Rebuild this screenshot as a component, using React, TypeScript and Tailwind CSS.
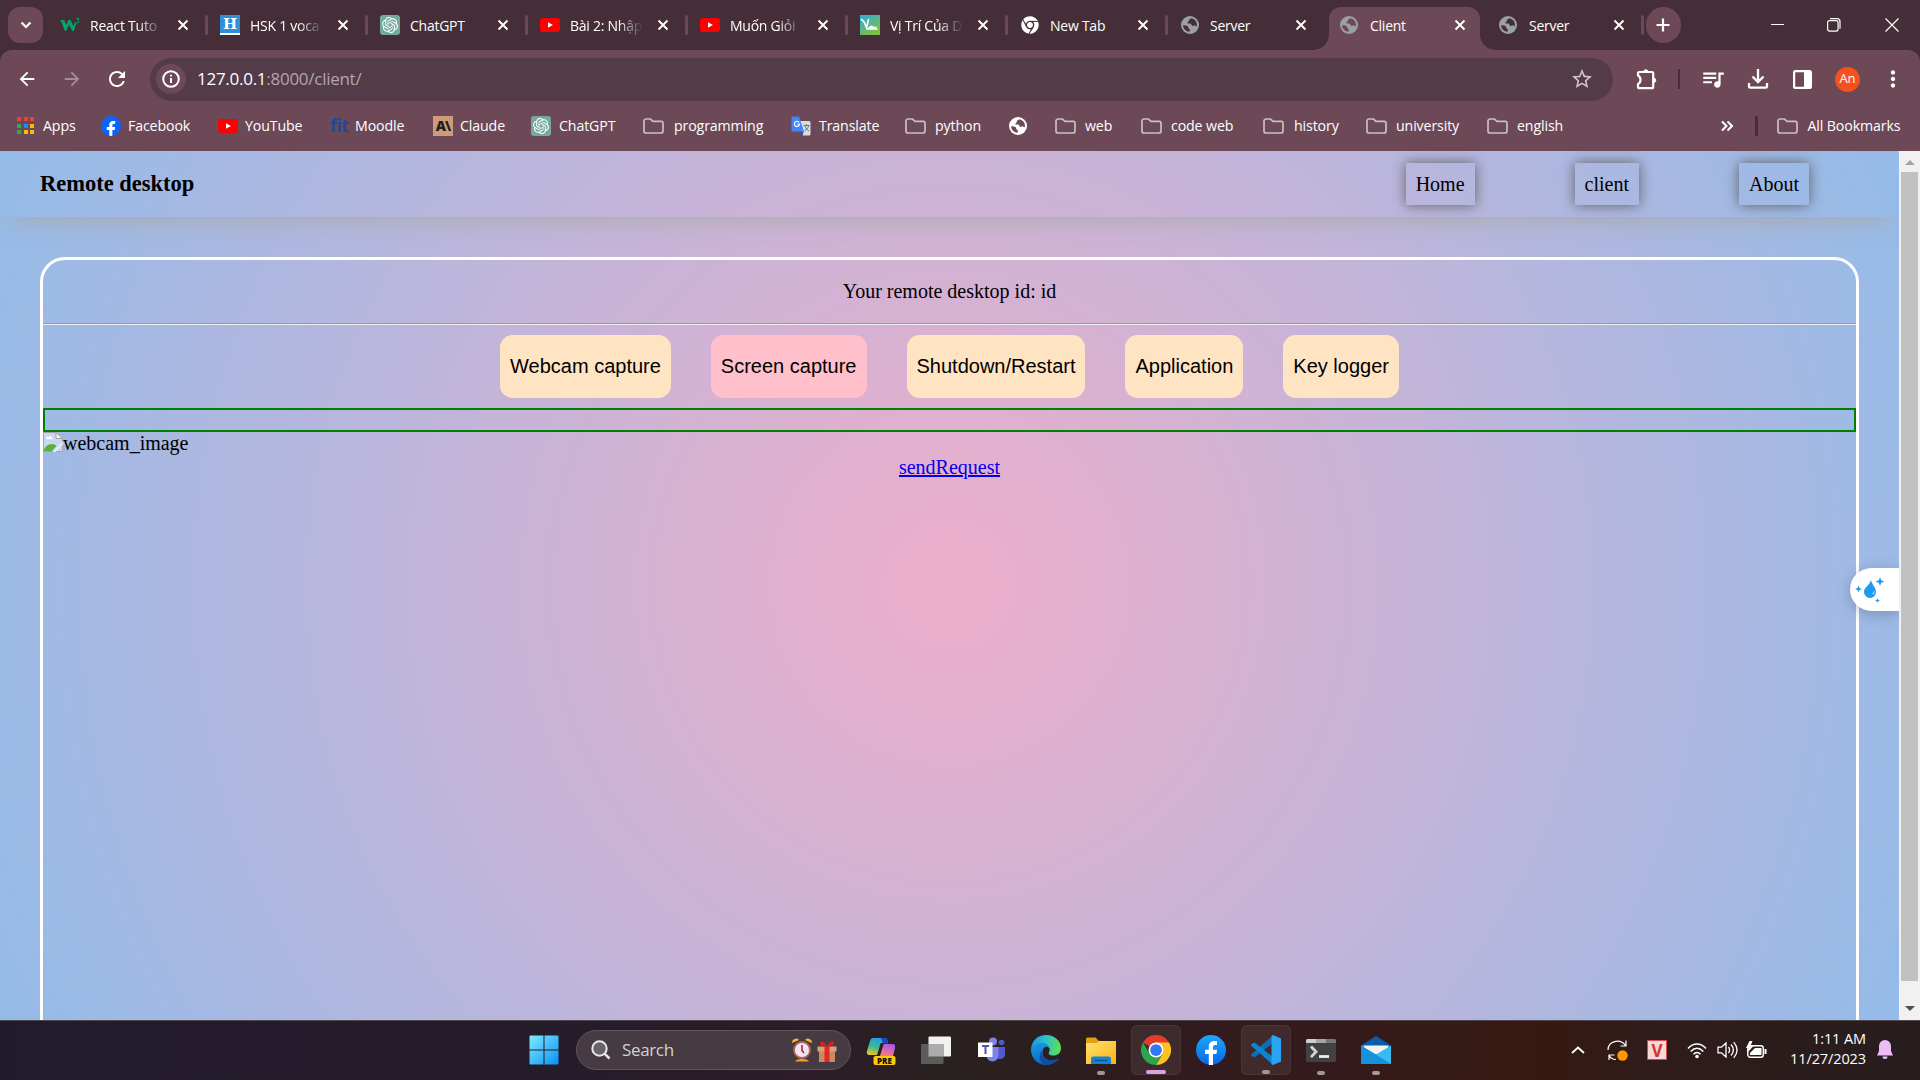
import React from "react";
import { SiOpenai } from "react-icons/si";
import { FaFacebookF, FaChrome } from "react-icons/fa";
import { MdQueueMusic, MdStarBorder, MdRefresh, MdArrowBack, MdArrowForward, MdMoreVert } from "react-icons/md";

const UI = "font-['Open_Sans','Noto_Sans',sans-serif]";

function Globe({ color, bg }: { color: string; bg: string }) {
  return (
    <svg width="18" height="18" viewBox="0 0 18 18" className="shrink-0">
      <circle cx="9" cy="9" r="9" fill={color} />
      <path d="M10.500 2.200c-.8 1-2.800.8-2.600 2.300.2 1.200-1.700 1.200-1.500 2.500.2 1 2 .3 3 .6 1.300.4.8 1.900 2 2.300 1.200.3 1.700-.7 2.700-.5.8.2.8 1 1.800.700a7 7 0 0 0-5.400-7.900z" fill={bg} />
      <path d="M2 9.300c1.600.2 3.600 0 4.700.9.900.9 0 2 1.400 2.500.9.400 1.100 1.400.3 3A6.900 6.900 0 0 1 2 9.300z" fill={bg} />
    </svg>
  );
}

function YouTube() {
  return (
    <svg width="20" height="20" viewBox="0 0 20 20" className="shrink-0">
      <rect y="3" width="20" height="14" rx="3.2" fill="#ff0000" />
      <path d="M8 7.200 12.900 10 8 12.800z" fill="#fff" />
    </svg>
  );
}

function Gpt() {
  return (
    <span className="flex h-5 w-5 shrink-0 items-center justify-center rounded-[3px] bg-[#74aa9c] text-white">
      <SiOpenai size={16} />
    </span>
  );
}

function W3() {
  return (
    <svg width="20" height="20" viewBox="0 0 20 20" className="shrink-0">
      <path d="M.500 5h3.700l2.300 5.200L8.200 5h2.300l3 6.200 1.300-3.400h1.700L13.800 16h-1.500L9 9.800 6.300 16H5z" fill="#04a56a" />
      <path d="M16.300 3.500h2.700l-1.300 1.700c1.800 0 1.800 2.600-.2 2.600-.7 0-1.200-.3-1.400-.8" fill="none" stroke="#04a56a" strokeWidth="1" />
    </svg>
  );
}

function HSquare() {
  return (
    <span className="flex h-5 w-5 shrink-0 items-center justify-center overflow-hidden border-b-2 border-white bg-[#2f8fdb] font-['DejaVu_Serif',serif] text-[15px] font-bold leading-none text-white">
      H
    </span>
  );
}

function GreenFav() {
  return (
    <svg width="20" height="20" viewBox="0 0 20 20" className="shrink-0">
      <defs>
        <linearGradient id="gf" x1="0" y1="0" x2=".6" y2="1">
          <stop offset="0" stopColor="#2fa9e0" />
          <stop offset="1" stopColor="#7cc142" />
        </linearGradient>
      </defs>
      <rect width="20" height="20" fill="url(#gf)" />
      <path d="M1.500 4.500c3 1.500 4 5 5.500 9.500h10M8.500 4.500 6.500 13" fill="none" stroke="#fff" strokeWidth="1.700" strokeLinecap="round" />
      <path d="M8 13.500c1.500-3 3.500-3.500 4.500-2.500s2.500 1 4.500.5l-1 2z" fill="#fff" />
    </svg>
  );
}

function Folder() {
  return (
    <svg width="21" height="16" viewBox="0 0 21 16" className="shrink-0">
      <path d="M1 3a2 2 0 0 1 2-2h4.500l2.500 2.300h8.200a1.800 1.800 0 0 1 1.800 1.800v7.900a2 2 0 0 1-2 2H3a2 2 0 0 1-2-2z" fill="none" stroke="#c7c0c3" strokeWidth="1.700" />
    </svg>
  );
}

function X() {
  return (
    <svg width="12" height="12" viewBox="0 0 12 12" className="shrink-0">
      <path d="M1.500 1.500 10.500 10.500M10.500 1.500 1.500 10.500" stroke="#fff" strokeWidth="1.900" />
    </svg>
  );
}

const tabs: { icon: React.ReactNode; title: string; sep: boolean; fade?: boolean }[] = [
  { icon: <W3 />, title: "React Tuto", sep: true, fade: true },
  { icon: <HSquare />, title: "HSK 1 voca", sep: true, fade: true },
  { icon: <Gpt />, title: "ChatGPT", sep: true },
  { icon: <YouTube />, title: "Bài 2: Nhập", sep: true, fade: true },
  { icon: <YouTube />, title: "Muốn Giỏi", sep: true, fade: true },
  { icon: <GreenFav />, title: "Vị Trí Của D", sep: true, fade: true },
  { icon: <FaChrome size={18} color="#fff" className="ml-px" />, title: "New Tab", sep: true },
  { icon: <span className="ml-px"><Globe color="#9aa0a6" bg="#452e38" /></span>, title: "Server", sep: false },
];

function TabBody({ icon, title, fade }: { icon: React.ReactNode; title: string; fade?: boolean }) {
  return (
    <>
      <span className="flex w-[30px] shrink-0 items-center">{icon}</span>
      <span
        className={
          "w-[73px] shrink-0 whitespace-nowrap text-[14px] tracking-[-0.25px] text-white " +
          (fade ? "[mask-image:linear-gradient(to_right,black_65%,transparent)]" : "")
        }
      >
        {title}
      </span>
    </>
  );
}

function TabStrip() {
  return (
    <div className="flex h-[50px] bg-[#452e38]">
      <div className="ml-2 mt-[7px] flex h-9 w-[35px] shrink-0 items-center justify-center rounded-xl bg-[#6d4958]">
        <svg width="12" height="8" viewBox="0 0 12 8"><path d="m1.500 1.500 4.500 4.500 4.500-4.500" fill="none" stroke="#fff" strokeWidth="2.200" /></svg>
      </div>
      <div className="ml-[17px] flex">
        {tabs.map((t, i) => (
          <div key={i} className={"flex h-[50px] shrink-0 items-center " + (i === 7 ? "w-[149px]" : "w-40")}>
            <TabBody icon={t.icon} title={t.title} fade={t.fade} />
            <span className={"flex " + (i === 7 ? "ml-[12px]" : "ml-[13.500px]")}><X /></span>
            {t.sep && <span className="ml-[16.500px] h-5 w-[2.500px] rounded bg-[#6d4958]" />}
          </div>
        ))}
        <div className="relative mt-[7px] flex h-[43px] w-[151px] shrink-0 items-center rounded-t-xl bg-[#6d4958] pb-[7px] pl-[11px]">
          <span className="absolute -left-[15px] bottom-0 h-[15px] w-[15px] bg-[radial-gradient(circle_at_0_0,#452e38_14.500px,#6d4958_15px)]" />
          <span className="absolute -right-[15px] bottom-0 h-[15px] w-[15px] bg-[radial-gradient(circle_at_100%_0,#452e38_14.500px,#6d4958_15px)]" />
          <TabBody icon={<Globe color="#9aa0a6" bg="#6d4958" />} title="Client" />
          <span className="ml-[11px] flex"><X /></span>
        </div>
        <div className="ml-[19px] flex h-[50px] items-center">
          <TabBody icon={<Globe color="#9aa0a6" bg="#452e38" />} title="Server" />
          <span className="ml-[11px] flex"><X /></span>
          <span className="ml-[16px] h-5 w-[2.500px] rounded bg-[#6d4958]" />
        </div>
      </div>
      <div className="ml-[2px] mt-[7px] flex h-9 w-[35px] shrink-0 items-center justify-center rounded-full bg-[#6d4958]">
        <svg width="14" height="14" viewBox="0 0 14 14"><path d="M7 .5v13M.5 7h13" stroke="#fff" strokeWidth="2.200" /></svg>
      </div>
      <svg width="13" height="50" viewBox="0 0 13 50" className="ml-auto shrink-0"><path d="M0 24.500h13" stroke="#fff" /></svg>
      <svg width="14" height="14" viewBox="0 0 14 14" className="ml-[43px] mt-[18px] shrink-0" fill="none" stroke="#fff" strokeWidth="1.200">
        <rect x=".6" y="2.600" width="10.500" height="10.500" rx="2" />
        <path d="M3 .7h7a3 3 0 0 1 3 3v7" />
      </svg>
      <svg width="14" height="14" viewBox="0 0 14 14" className="ml-[44px] mr-[21px] mt-[18px] shrink-0"><path d="m.5.500 13 13M13.500.500l-13 13" stroke="#fff" strokeWidth="1.200" /></svg>
    </div>
  );
}

function Toolbar() {
  return (
    <div className="bg-[#452e38]">
      <div className="flex h-[57px] items-center rounded-t-xl bg-[#6d4958] pt-px text-white">
        <MdArrowBack size={22} className="ml-[16px] shrink-0" />
        <MdArrowForward size={22} className="ml-[23px] shrink-0 text-[#a48c97]" />
        <MdRefresh size={24} className="ml-[22px] shrink-0" />
        <div className="ml-[21px] flex h-[43px] w-[1463px] shrink-0 items-center rounded-full bg-[#533b48]">
          <span className="ml-[6px] flex h-[30px] w-[30px] items-center justify-center rounded-full bg-[#6d4958]">
            <svg width="18" height="18" viewBox="0 0 18 18" fill="none" stroke="#fff" strokeWidth="2">
              <circle cx="9" cy="9" r="7.800" />
              <path d="M9 8v5M9 4.700v1.900" />
            </svg>
          </span>
          <span className="ml-[11px] text-[17px] tracking-[-0.27px]">
            127.0.0.1<span className="text-[#b3a6ad]">:8000/client/</span>
          </span>
          <MdStarBorder size={24} className="ml-auto mr-[19px] text-[#cfc6ca]" />
        </div>
        <svg width="22" height="22" viewBox="0 0 22 22" className="ml-[23px] shrink-0" fill="none" stroke="#fff" strokeWidth="2.200">
          <path d="M2 7.500V5.200A1.200 1.200 0 0 1 3.200 4H16a1.200 1.200 0 0 1 1.200 1.200V19a1.200 1.200 0 0 1-1.200 1.200H3.200A1.200 1.200 0 0 1 2 19v-3c1.600-.8 2.500-2 2.500-4S3.600 8.300 2 7.500z" strokeLinejoin="round" />
          <path d="M7.500 3.500a2.400 2.400 0 0 1 4.600 0zM18 10a2.400 2.400 0 0 1 0 4.600z" fill="#fff" strokeWidth="1" />
        </svg>
        <span className="ml-[20px] h-5 w-[2px] bg-[#452e38]" />
        <MdQueueMusic size={26} className="ml-[20px] shrink-0" />
        <svg width="22" height="22" viewBox="0 0 22 22" className="ml-[20.500px] shrink-0" fill="none" stroke="#fff" strokeWidth="2.300">
          <path d="M11 1v12.500M5.500 8.500 11 14l5.500-5.500M2 15v3.500a1.200 1.200 0 0 0 1.200 1.200h15.600a1.200 1.200 0 0 0 1.200-1.200V15" />
        </svg>
        <svg width="19" height="19" viewBox="0 0 19 19" className="ml-[24.500px] shrink-0">
          <rect x="1.100" y="1.100" width="16.800" height="16.800" rx="1.500" fill="none" stroke="#fff" strokeWidth="2.200" />
          <path d="M11 1h7v17h-7z" fill="#fff" />
        </svg>
        <span className="ml-[23px] flex h-[25px] w-[25px] shrink-0 items-center justify-center rounded-full bg-[#f4511e] text-[13px]">An</span>
        <MdMoreVert size={26} className="ml-[20px] shrink-0" />
      </div>
    </div>
  );
}

function AppsIcon() {
  const c = ["#ea4335", "#ea4335", "#ea4335", "#34a853", "#1a8cff", "#fbbc04", "#34a853", "#fbbc04", "#fbbc04"];
  return (
    <span className="grid grid-cols-3 gap-[2.500px]">
      {c.map((x, i) => (
        <span key={i} className="h-1 w-1" style={{ background: x }} />
      ))}
    </span>
  );
}

function Bm({ icon, label, w, iw }: { icon: React.ReactNode; label?: string; w: string; iw: string }) {
  return (
    <div className={"flex shrink-0 items-center whitespace-nowrap " + w}>
      <span className={"flex shrink-0 items-center " + iw}>{icon}</span>
      <span>{label}</span>
    </div>
  );
}

function Bookmarks() {
  return (
    <div className="flex h-11 items-center border-t border-[#694655] bg-[#6d4958] pb-[7px] pl-[17px] text-[14.200px] tracking-[-0.13px] text-white">
      <Bm w="w-[84px]" iw="w-[26px]" icon={<AppsIcon />} label="Apps" />
      <Bm w="w-[117px]" iw="w-[27px]" icon={<span className="flex h-5 w-5 items-end justify-center overflow-hidden rounded-full bg-[#0866ff]"><FaFacebookF size={16} className="-mb-px" /></span>} label="Facebook" />
      <Bm w="w-[112px]" iw="w-[27px]" icon={<YouTube />} label="YouTube" />
      <Bm w="w-[103px]" iw="w-[25px]" icon={<span className="text-[17px] font-bold leading-none tracking-[-0.2px] text-[#1b4a9c]">fit</span>} label="Moodle" />
      <Bm w="w-[98px]" iw="w-[27px]" icon={<span className="flex h-5 w-5 items-center justify-center bg-[#cc9b7a] text-[14px] font-extrabold leading-none tracking-[-1px] text-[#1f1f1e]">A\</span>} label="Claude" />
      <Bm w="w-[112px]" iw="w-[28px]" icon={<Gpt />} label="ChatGPT" />
      <Bm w="w-[148px]" iw="w-[31px]" icon={<Folder />} label="programming" />
      <Bm
        w="w-[114px]"
        iw="w-[28px]"
        icon={
          <svg width="20" height="20" viewBox="0 0 20 20">
            <path d="M8 5h10a1.500 1.500 0 0 1 1.500 1.500V18A1.500 1.500 0 0 1 18 19.500h-6z" fill="#d9dce0" />
            <path d="M12.500 9.500h6M15.500 8v1.500M14 10c.5 2 2 4 4 5M17.500 10c-.5 2-2 4-4 5" stroke="#6a7a80" fill="none" />
            <path d="M1.500.5H8l5 15H1.500A1 1 0 0 1 .5 14.500V1.500a1 1 0 0 1 1-1z" fill="#4285f4" />
            <path d="m10.500 15.500 2.500 0-2 4z" fill="#1a56c4" />
            <path d="M8 6.200A2.600 2.600 0 1 0 8.600 8H6.200" fill="none" stroke="#fff" strokeWidth="1.200" />
          </svg>
        }
        label="Translate"
      />
      <Bm w="w-[104px]" iw="w-[30px]" icon={<Folder />} label="python" />
      <Bm w="w-[46px]" iw="w-[30px]" icon={<Globe color="#fff" bg="#6d4958" />} />
      <Bm w="w-[86px]" iw="w-[30px]" icon={<Folder />} label="web" />
      <Bm w="w-[122px]" iw="w-[30px]" icon={<Folder />} label="code web" />
      <Bm w="w-[103px]" iw="w-[31px]" icon={<Folder />} label="history" />
      <Bm w="w-[121px]" iw="w-[30px]" icon={<Folder />} label="university" />
      <Bm w="w-[234px]" iw="w-[30px]" icon={<Folder />} label="english" />
      <svg width="12" height="12" viewBox="0 0 12 12" fill="none" stroke="#fff" strokeWidth="2"><path d="m1 1.500 4.500 4.500L1 10.500M6.500 1.500 11 6l-4.500 4.500" /></svg>
      <span className="ml-[22px] mr-[19px] h-5 w-[3px] rounded bg-[#452e38]" />
      <Bm w="w-[130px]" iw="w-[30.500px]" icon={<Folder />} label="All Bookmarks" />
    </div>
  );
}

function NavItem({ children }: { children: React.ReactNode }) {
  return <span className="flex h-[42px] items-center px-[10px] pt-px shadow-[0_0_12.500px_0_#606060]">{children}</span>;
}

function Action({ label, on }: { label: string; on?: boolean }) {
  return (
    <span className={"flex h-[63px] items-center rounded-[12.500px] px-[10px] font-['Liberation_Sans',Arial,sans-serif] text-[20px] " + (on ? "bg-[#ffc0cb]" : "bg-[#ffe4c4]")}>
      {label}
    </span>
  );
}

function BrokenImage() {
  return (
    <svg width="20" height="20" viewBox="0 0 20 20" className="shrink-0">
      <path d="M.5.500h12.500l6.500 6v13H.5z" fill="#c5d9f4" stroke="#a3a3a3" />
      <path d="M13 .5v6h6.500z" fill="#f4f4f4" stroke="#a3a3a3" />
      <path d="M3 6.500c0-2 2-2 2.400-1.200C6 3.500 9 4 9 6c1 0 1 1.200 0 1.200H4z" fill="#fff" />
      <path d="M1 19c0-4 4-7 8-7 2 0 3.500.8 4.500 2l-4.500 5z" fill="#5cb03c" />
      <path d="M9.500 20 20 9.500v3L12.500 20z" fill="#e4ebf8" />
    </svg>
  );
}

function Page() {
  return (
    <div className="flex h-[869px]">
      <div className="relative w-[1899px] overflow-hidden bg-[radial-gradient(circle,#eeaeca_0%,#94bbe9_100%)] font-['Liberation_Serif','Times_New_Roman',serif] text-[20px] leading-[23px] text-black">
        <header className="flex h-[66px] items-center pl-[40px] pr-[90px] shadow-[0_12px_25px_-10px_#aaaaaa]">
          <h1 className="pb-[2px] text-[22.500px] font-bold">Remote desktop</h1>
          <nav className="ml-auto flex gap-[100px]">
            <NavItem>Home</NavItem>
            <NavItem>client</NavItem>
            <NavItem>About</NavItem>
          </nav>
        </header>
        <main className="mx-[40px] mt-[40px] h-[785px] rounded-[25px] border-[3px] border-white">
          <div className="flex h-[63px] items-center justify-center">Your remote desktop id: id</div>
          <div className="h-[2px] border-b border-t border-b-[#eeeeee] border-t-[#9a9a9a]" />
          <div className="flex justify-center gap-[40px] py-[10px]">
            <Action label="Webcam capture" />
            <Action label="Screen capture" on />
            <Action label="Shutdown/Restart" />
            <Action label="Application" />
            <Action label="Key logger" />
          </div>
          <div className="h-[24px] border-2 border-[#008000]" />
          <div className="flex h-[23px] items-start"><BrokenImage />webcam_image</div>
          <div className="pt-px text-center text-[#0000ee] underline">sendRequest</div>
        </main>
        <div className="absolute right-0 top-[417px] flex h-[43px] w-[49px] items-center rounded-l-full bg-white pl-[4px] shadow-[0_3px_14px_rgba(60,70,110,0.35)]">
          <svg width="32" height="32" viewBox="0 0 32 32" fill="#1d9bf0">
            <path d="M17 6c1 5 5 7 5 12a6 6 0 0 1-12 0c0-5 5.500-6 7-12z" />
            <path d="M20 16.500a1.500 2 0 1 1-2 3c1.500 0 2-1.200 2-3z" fill="#fff" />
            <path d="m26 3 1.200 3.300L30.500 7.500l-3.300 1.200L26 12l-1.200-3.300L21.500 7.500l3.300-1.200zM4.500 11.500l1 2.500 2.500 1-2.500 1-1 2.500-1-2.500-2.500-1 2.500-1zM23.500 24l.7 1.800 1.800.7-1.800.7-.7 1.800-.7-1.800-1.800-.7 1.800-.7z" />
          </svg>
        </div>
      </div>
      <div className="flex w-[21px] flex-col items-center bg-[#f1f1f1]">
        <span className="mt-[9px] h-0 w-0 border-x-[5px] border-b-[5px] border-x-transparent border-b-[#a3a3a3]" />
        <span className="mt-[7px] h-[809px] w-[17px] bg-[#c1c1c1]" />
        <span className="mt-[25px] h-0 w-0 border-x-[5px] border-t-[5px] border-x-transparent border-t-[#505050]" />
      </div>
    </div>
  );
}

function App55({ children, active, bar }: { children: React.ReactNode; active?: boolean; bar?: "on" | "dot" }) {
  return (
    <div className="flex w-[55px] shrink-0 justify-center">
      <div className={"relative flex h-[50px] w-[50px] items-center justify-center rounded-md " + (active ? "border border-white/5 bg-white/7" : "")}>
        {children}
        {bar === "on" && <span className="absolute bottom-0 h-1 w-5 rounded-full bg-[#d9a0e6]" />}
        {bar === "dot" && <span className="absolute bottom-0 h-1 w-2 rounded-full bg-[#a09898]" />}
      </div>
    </div>
  );
}

function Taskbar() {
  return (
    <div className="flex h-[60px] items-center border-t border-[#50474c] bg-[linear-gradient(90deg,#221b2c_0%,#251c2a_28%,#2c1d28_42%,#29211f_50%,#301b1e_60%,#351a1c_70%,#36190f_80%,#2f1c1a_86%,#271d1f_100%)] pb-px pl-[516.500px] text-white">
      <App55>
        <svg width="30" height="30" viewBox="0 0 30 30">
          <defs><linearGradient id="wn" x1="0" y1="0" x2="1" y2="1"><stop offset="0" stopColor="#7cecff" /><stop offset="1" stopColor="#0a90f5" /></linearGradient></defs>
          <path d="M.5 1.500a1 1 0 0 1 1-1h13v14H.5zM15.500.500h13a1 1 0 0 1 1 1v13h-14zM.5 15.500h14v14h-13a1 1 0 0 1-1-1zM15.500 15.500h14v13a1 1 0 0 1-1 1h-13z" fill="url(#wn)" />
        </svg>
      </App55>
      <div className="ml-[4.500px] mr-[2.500px] flex h-10 w-[275px] shrink-0 items-center rounded-full border border-[#5f555b] bg-[#463b42] pl-[14px] pr-[13px]">
        <svg width="20" height="20" viewBox="0 0 20 20" fill="none" stroke="#e8e8e8" strokeWidth="2"><circle cx="8.500" cy="8.500" r="7.200" fill="#6a6268" /><path d="m13.800 13.800 4.700 4.700" strokeWidth="2.500" /></svg>
        <span className="ml-[11px] text-[17px] tracking-[-0.35px] text-[#d4cfd2]">Search</span>
        <svg width="20" height="24" viewBox="0 0 20 24" className="ml-auto">
          <path d="M0 5a4 4 0 0 1 7-3zM20 5a4 4 0 0 0-7-3z" fill="#f2b632" />
          <path d="M3 23.500c1-3.500 13-3.500 14 0z" fill="#f0a020" />
          <circle cx="10" cy="12" r="8" fill="#ece5f2" stroke="#b5654f" strokeWidth="1.800" />
          <path d="M10 7v5.500l2 2.500" stroke="#b02040" strokeWidth="1.600" fill="none" />
        </svg>
        <svg width="20" height="22" viewBox="0 0 20 22" className="ml-[5px] mt-[3px]">
          <path d="M2 9h16v12H2z" fill="#c98a62" /><path d="M.5 5.500h19v5H.5z" fill="#dba078" />
          <path d="M7.500 5.500h5V21h-5z" fill="#e02828" /><path d="M10 6C7 6 2 5 3 2s6-1 7 4c1-5 6-7 7-4s-4 4-7 4z" fill="#d81f1f" />
        </svg>
      </div>
      <App55>
        <svg width="30" height="30" viewBox="0 0 30 30" className="mt-[1px]">
          <defs>
            <linearGradient id="c1" x1=".6" y1="0" x2=".3" y2="1"><stop offset="0" stopColor="#209cf0" /><stop offset=".55" stopColor="#40b890" /><stop offset="1" stopColor="#e6c52c" /></linearGradient>
            <linearGradient id="c2" x1=".6" y1="0" x2=".2" y2="1"><stop offset="0" stopColor="#a558e8" /><stop offset=".6" stopColor="#e667b0" /><stop offset="1" stopColor="#f08a5c" /></linearGradient>
          </defs>
          <path d="M7 2h12c2 0 2.500 2 3 5h-6c-2 0-2 2-2.500 4L11 19H4c-3 0-3.500-2-3-4L4 5c.5-2 1.500-3 3-3z" fill="url(#c1)" />
          <path d="M15 2h4c2 0 2.500 2 3 5.500h-5z" fill="#1c45bd" />
          <path d="M19 8h7c3 0 3.500 2 3 4l-2 8H14l3-10c.4-1.500 1-2 2-2z" fill="url(#c2)" />
          <rect x="7.500" y="20" width="22" height="9" rx="2" fill="#ffc90e" />
          <text x="18.500" y="27.500" textAnchor="middle" fontFamily="Open Sans, sans-serif" fontWeight="800" fontSize="8" fill="#111">PRE</text>
        </svg>
      </App55>
      <App55>
        <svg width="30" height="28" viewBox="0 0 30 28"><rect x="7.500" y=".5" width="22.500" height="20" rx="1" fill="#f2f2f2" /><rect y="8" width="22.500" height="20" rx="1" fill="#5c5c5c" /><path d="M7.500 8h15v12.500h-15z" fill="#acacac" /></svg>
      </App55>
      <App55>
        <svg width="27" height="26" viewBox="0 0 27 26">
          <circle cx="15" cy="4.500" r="4" fill="#7b83eb" /><circle cx="23.500" cy="5.500" r="2.800" fill="#5059c9" />
          <path d="M19 10h8v8a5 5 0 0 1-8 3z" fill="#5059c9" /><path d="M8 10h12.500v8.500a6 6 0 0 1-12 0z" fill="#7b83eb" />
          <rect y="5.500" width="14.500" height="14.500" fill="#fff" /><path d="M4 9h7M7.500 9v8" stroke="#4b53bc" strokeWidth="2" />
        </svg>
      </App55>
      <App55>
        <svg width="30" height="30" viewBox="0 0 30 30">
          <defs>
            <linearGradient id="e1" x1="0" y1=".3" x2="1" y2=".4"><stop offset="0" stopColor="#2496dd" /><stop offset=".5" stopColor="#2bc3c9" /><stop offset="1" stopColor="#63df4c" /></linearGradient>
            <linearGradient id="e2" x1="0" y1="0" x2=".3" y2="1"><stop offset="0" stopColor="#1a9de8" /><stop offset="1" stopColor="#0968c0" /></linearGradient>
          </defs>
          <path d="M0 14C1 5 7 0 15 0c9 0 15 6.500 15 13 0 5-3.500 7.500-7.500 7.500-4 0-5.500-1.500-4.500-3 2-3 0-9-7-9C5 8.500 1.500 11 0 14z" fill="url(#e1)" />
          <path d="M0 14c1.500-4 6-6.500 10.500-6.200C15 8 18 10.500 18.400 13.500c-1-1.500-2.500-2-4-1.500-3 1-4 6-1.500 10 2.500 3.500 8 4.500 13 2A15 15 0 0 1 15 30C6 30-.5 22.500 0 14z" fill="url(#e2)" />
          <path d="M10.500 15.500c-.5 6 5 11 12 9.500 2.500-.5 4.500-2 5.500-1.500-2.500 4-7.500 6.500-13 6.500-6-.5-8-8-4.500-14.500z" fill="#0f4fa0" />
        </svg>
      </App55>
      <App55 bar="dot">
        <svg width="30" height="27" viewBox="0 0 30 27">
          <defs><linearGradient id="fe" x1="0" y1="0" x2="1" y2="1"><stop offset="0" stopColor="#ffe070" /><stop offset="1" stopColor="#fbb410" /></linearGradient></defs>
          <path d="M0 2a1.500 1.500 0 0 1 1.500-1.500h8L13 4h17v10H0z" fill="#e0a010" /><path d="M0 6h11l2-2h16a1 1 0 0 1 1 1v22H0z" fill="url(#fe)" />
          <path d="M5 27v-5a2.500 2.500 0 0 1 2.500-2.500h15A2.500 2.500 0 0 1 25 22v5z" fill="#1583d6" /><path d="M8.500 23.500h13" stroke="#0b5499" strokeWidth="1.300" />
        </svg>
      </App55>
      <App55 active bar="on">
        <svg width="30" height="30" viewBox="0 0 48 48">
          <path d="M24 24 3.200 12A24 24 0 0 1 44.800 12z" fill="#e33b2e" />
          <path d="M24 12h20.800A24 24 0 0 1 24 48l10.400-18z" fill="#fcc31e" />
          <path d="M3.200 12A24 24 0 0 0 24 48l10.400-18H13.600z" fill="#2da44e" />
          <circle cx="24" cy="24" r="12" fill="#fff" /><circle cx="24" cy="24" r="9.400" fill="#3579ee" />
        </svg>
      </App55>
      <App55>
        <svg width="30" height="30" viewBox="0 0 30 30">
          <defs><linearGradient id="fb" x1="0" y1="0" x2="0" y2="1"><stop offset="0" stopColor="#19a8fb" /><stop offset="1" stopColor="#0866e6" /></linearGradient></defs>
          <circle cx="15" cy="15" r="15" fill="url(#fb)" />
          <path d="M12.800 30V19H9v-4.300h3.800v-2.800c0-3.900 2.200-6 5.800-6 1.200 0 2.400.2 2.400.2V10h-1.800c-1.900 0-2.200 1.100-2.200 2.300v2.400h4.100l-.7 4.300H17v11z" fill="#fff" />
        </svg>
      </App55>
      <App55 active bar="dot">
        <svg width="30" height="30" viewBox="0 0 30 30">
          <path d="M0 19.500 22 0v8L3.500 22.500 0 20.500z" fill="#0a6fb5" />
          <path d="M0 10.500v-1L3.500 7.500 22 22v8L0 10.500z" fill="#0c84cf" />
          <path d="M22 0 30 3.500v23L22 30l-1.500-1V1z" fill="#2ba5f2" />
        </svg>
      </App55>
      <App55 bar="dot">
        <svg width="30" height="23" viewBox="0 0 30 23">
          <rect width="30" height="23" rx="1.500" fill="#424242" /><path d="M1.500 0H10v4H0V1.500A1.500 1.500 0 0 1 1.500 0z" fill="#cfcfcf" /><path d="M10 0h10v4H10z" fill="#a5a5a5" /><path d="M20 0h8.500A1.500 1.500 0 0 1 30 1.500V4H20z" fill="#767676" />
          <path d="m5 7.500 5 5.300-5 5.300" stroke="#d5d5d5" strokeWidth="2.800" fill="none" /><path d="M13 17.500h10" stroke="#eee" strokeWidth="2.800" />
        </svg>
      </App55>
      <App55 bar="dot">
        <svg width="30" height="28" viewBox="0 0 30 28">
          <path d="M0 9.500 15 0l15 9.500V14H0z" fill="#0a5ca8" /><path d="M2.500 9.500h25V18h-25z" fill="#f2f2f2" />
          <path d="M0 9.500 15 18.500 30 9.500V28H0z" fill="#35bdf2" /><path d="M0 9.500 30 28H0z" fill="#1592de" />
        </svg>
      </App55>
      <div className="ml-[167px] flex items-center">
        <svg width="14" height="8" viewBox="0 0 14 8"><path d="m1 7 6-5.500L13 7" fill="none" stroke="#fff" strokeWidth="1.800" /></svg>
        <svg width="21" height="21" viewBox="0 0 21 21" className="ml-[22.500px]" fill="none" stroke="#fff" strokeWidth="1.200">
          <path d="M1 10C1 1 13-2 18.500 5.500M19 .5v5.500h-5.500M2 20v-5h5.500M2 15.500c1.500 2.500 4 4 7 4" /><circle cx="15.500" cy="15.500" r="5.200" fill="#ff9800" stroke="none" />
        </svg>
        <span className="ml-[19px] flex h-5 w-5 items-center justify-center border border-[#d24a4a] bg-[#f8d8d6] text-[17px] font-bold leading-none text-[#cf3636]">V</span>
        <svg width="20" height="17" viewBox="0 0 20 17" className="ml-[20px]" fill="none" stroke="#fff" strokeWidth="1.500">
          <path d="M1 6.500c5-6 13-6 18 0M3.700 9.500c4-4.300 8.600-4.300 12.600 0M6.400 12.300c2.400-2.500 4.800-2.500 7.200 0" /><circle cx="10" cy="14.500" r="1.800" fill="#fff" stroke="none" />
        </svg>
        <svg width="21" height="18" viewBox="0 0 21 18" className="ml-[9.500px]" fill="none" stroke="#fff" strokeWidth="1.300">
          <path d="M1 6.200h3.500L9 2v14l-4.500-4.200H1zM11.500 6c1.500 2 1.500 4 0 6M14 3.500c3 3.500 3 7.500 0 11M16.700 1.200c4.300 5 4.300 10.600 0 15.600" />
        </svg>
        <svg width="21" height="18" viewBox="0 0 21 18" className="ml-[8.500px]">
          <rect x="1.800" y="4.700" width="15.500" height="11.500" rx="2.500" fill="none" stroke="#fff" strokeWidth="1.400" /><path d="M4 12 9 7h6.500v7H4z" fill="#fff" /><path d="M18.500 8h2v5h-2z" fill="#fff" /><path d="M3.500 0 0 7h2.500L1 12l6.500-7H4.500L6.500 0z" fill="#fff" />
        </svg>
      </div>
      <div className="ml-auto mr-[11px] pb-[2px] text-right text-[14.500px] leading-[20px] tracking-[-0.1px]">
        <div>1:11 AM</div>
        <div>11/27/2023</div>
      </div>
      <svg width="16" height="20" viewBox="0 0 16 20" className="mr-[27px] shrink-0" fill="#ecbcf2"><path d="M8 0a6 6 0 0 1 6 6v5l2 4.500H0L2 11V6a6 6 0 0 1 6-6zM5.500 16.500h5a2.500 2.500 0 0 1-5 0z" /></svg>
    </div>
  );
}

export default function App() {
  return (
    <div className={"h-[1080px] w-[1920px] overflow-hidden " + UI}>
      <TabStrip />
      <Toolbar />
      <Bookmarks />
      <Page />
      <Taskbar />
    </div>
  );
}
